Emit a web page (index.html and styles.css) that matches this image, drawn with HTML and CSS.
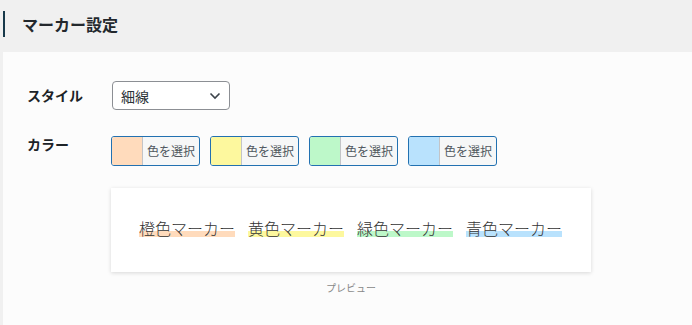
FILE: index.html
```html
<!DOCTYPE html>
<html lang="ja">
<head>
    <meta charset="UTF-8">
    <title>マーカー設定</title>
    <link rel="stylesheet" href="styles.css">
</head>
<body>
    <div class="header">
        <h2 class="title">マーカー設定</h2>
    </div>
    <div class="panel">
        <div class="row">
            <div class="label label_mid">スタイル</div>
            <div class="select">
                <span>細線</span>
                <svg class="chevron" width="12" height="8" viewBox="0 0 12 8"><path d="M1.5 1.5 L6 6 L10.5 1.5" fill="none" stroke="#3c434a" stroke-width="1.6"/></svg>
            </div>
        </div>
        <div class="row row_color">
            <div class="label">カラー</div>
            <div class="colors">
                <button class="pick" type="button"><span class="swatch orange"></span><span class="pick_text">色を選択</span></button>
                <button class="pick" type="button"><span class="swatch yellow"></span><span class="pick_text">色を選択</span></button>
                <button class="pick" type="button"><span class="swatch green"></span><span class="pick_text">色を選択</span></button>
                <button class="pick" type="button"><span class="swatch blue"></span><span class="pick_text">色を選択</span></button>
            </div>
        </div>
        <div class="preview_wrap">
            <div class="preview">
                <span class="marker m_orange">橙色マーカー</span>
                <span class="marker m_yellow">黄色マーカー</span>
                <span class="marker m_green">緑色マーカー</span>
                <span class="marker m_blue">青色マーカー</span>
            </div>
            <div class="caption">プレビュー</div>
        </div>
    </div>
</body>
</html>
```
FILE: styles.css
```css
body, html {
    margin: 0;
    padding: 0;
    width: 100%;
    height: 100%;
    overflow: hidden;
}
body {
    background: #f0f0f0;
    font-family: "Noto Sans CJK JP", "Noto Sans", sans-serif;
    color: #1d2327;
}
.header {
    height: 52px;
    padding: 11px 0 0 3px;
    box-sizing: border-box;
}
.title {
    margin: 0;
    height: 26px;
    line-height: 26px;
    border-left: 2px solid #17394a;
    padding-left: 17px;
    font-size: 16px;
    font-weight: bold;
    color: #23282d;
}
.panel {
    margin-left: 3px;
    background: #fcfcfc;
    height: calc(100% - 52px);
    padding: 29px 0 0 24px;
    box-sizing: border-box;
}
.row {
    display: flex;
    align-items: center;
}
.row_color {
    align-items: flex-start;
    margin-top: 26px;
}
.label {
    width: 85px;
    font-size: 14px;
    font-weight: bold;
    line-height: 20px;
    color: #1d2327;
}
.label_mid {
    margin-top: -2px;
}
.row_color .label {
    margin-top: -2px;
}
.select {
    width: 118px;
    height: 29px;
    box-sizing: border-box;
    border: 1px solid #8c8f94;
    border-radius: 4px;
    background: #fff;
    display: flex;
    align-items: center;
    justify-content: space-between;
    padding: 0 8px 0 8px;
    font-size: 14px;
    color: #2c3338;
}
.chevron {
    margin-top: 1px;
}
.colors {
    display: flex;
    gap: 10px;
    margin-left: -1px;
}
.pick {
    display: flex;
    padding: 0;
    margin: 0;
    height: 30px;
    border: 1px solid #2271b1;
    border-radius: 3px;
    overflow: hidden;
    background: #f6f7f7;
    font-family: inherit;
}
.swatch {
    width: 30px;
    height: 100%;
    border-right: 1px solid #c3c4c7;
}
.orange { background: #ffdbbc; }
.yellow { background: #fdf89e; }
.green { background: #bdf8c9; }
.blue { background: #b9e2fd; }
.pick_text {
    padding: 0 4px 0 4px;
    font-size: 12px;
    line-height: 28px;
    color: #50575e;
}
.preview_wrap {
    margin: 22px 0 0 84px;
    width: 480px;
}
.preview {
    height: 84px;
    background: #fff;
    box-shadow: 0 1px 4px rgba(0, 0, 0, 0.15);
    display: flex;
    align-items: center;
    gap: 13px;
    padding: 0 0 4px 28px;
    box-sizing: border-box;
}
.marker {
    display: inline-block;
    font-size: 16px;
    font-weight: 300;
    line-height: 18px;
    color: #333;
}
.m_orange { background: linear-gradient(transparent 65%, #ffdbbc 65%); }
.m_yellow { background: linear-gradient(transparent 65%, #fdf89e 65%); }
.m_green { background: linear-gradient(transparent 65%, #bdf8c9 65%); }
.m_blue { background: linear-gradient(transparent 65%, #b9e2fd 65%); }
.caption {
    text-align: center;
    font-size: 10px;
    color: #888;
    margin-top: 8px;
}
```
